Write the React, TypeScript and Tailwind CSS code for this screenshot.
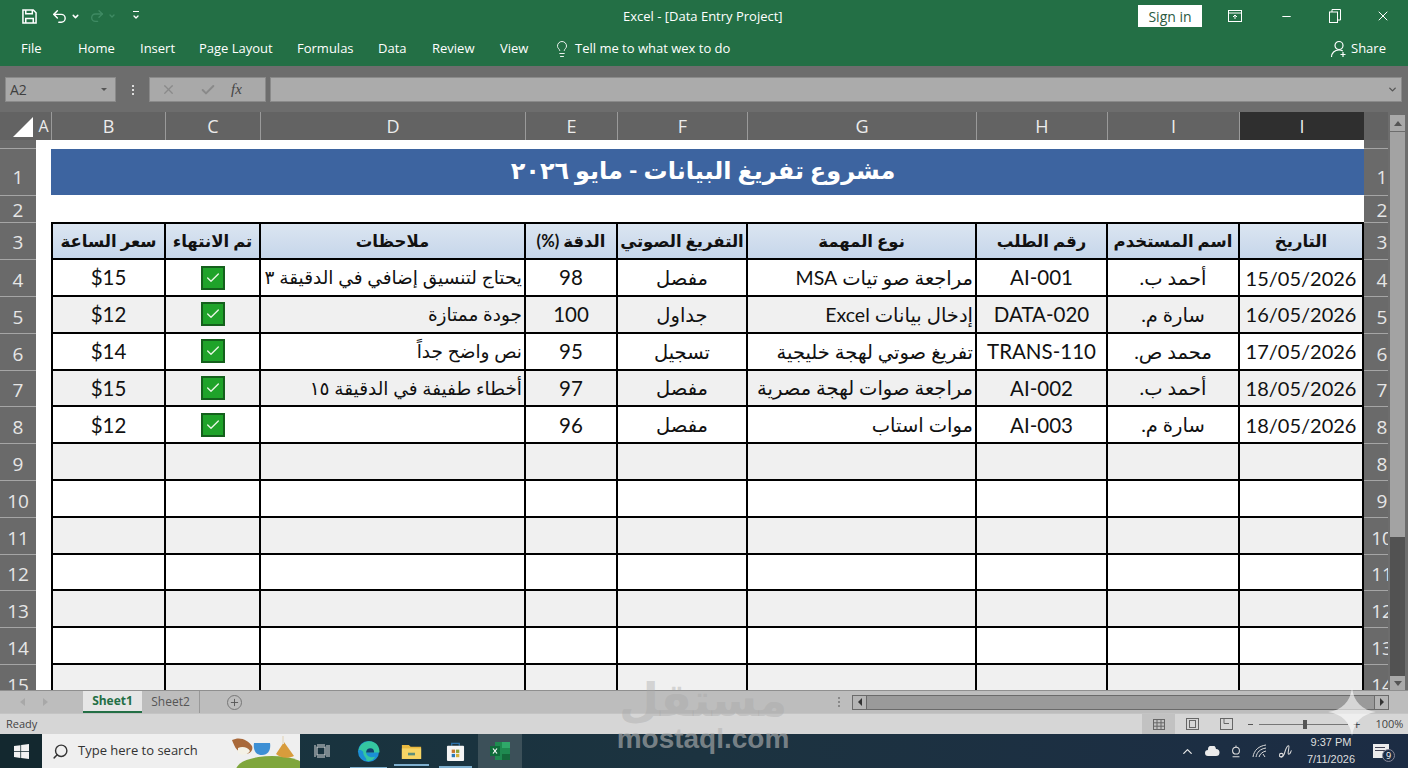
import { Lightbulb, Search, ChevronUp, Check, Minus, X, Undo2, Redo2, ChevronDown, Plus } from "lucide-react";

const columnGrid = "grid grid-cols-[115px_95px_265px_92px_130px_229px_131px_132px_124px]";
const cellFont = "[font-family:Lato,'DejaVu_Sans',sans-serif]";
const uiFont = "[font-family:'Open_Sans','DejaVu_Sans',sans-serif]";

const headers = ["سعر الساعة", "تم الانتهاء", "ملاحظات", "الدقة (%)", "التفريغ الصوتي", "نوع المهمة", "رقم الطلب", "اسم المستخدم", "التاريخ"];

const rows = [
  { price: "$15", note: "يحتاج لتنسيق إضافي في الدقيقة ٣", acc: "98", kind: "مفصل", task: "مراجعة صو تيات MSA", id: "AI-001", user: "أحمد ب.", date: "15/05/2026" },
  { price: "$12", note: "جودة ممتازة", acc: "100", kind: "جداول", task: "إدخال بيانات Excel", id: "DATA-020", user: "سارة م.", date: "16/05/2026" },
  { price: "$14", note: "نص واضح جداً", acc: "95", kind: "تسجيل", task: "تفريغ صوتي لهجة خليجية", id: "TRANS-110", user: "محمد ص.", date: "17/05/2026" },
  { price: "$15", note: "أخطاء طفيفة في الدقيقة ١٥", acc: "97", kind: "مفصل", task: "مراجعة صوات لهجة مصرية", id: "AI-002", user: "أحمد ب.", date: "18/05/2026" },
  { price: "$12", note: "", acc: "96", kind: "مفصل", task: "موات استاب", id: "AI-003", user: "سارة م.", date: "18/05/2026" },
];

const columnHeads = [
  { label: "B", w: "w-[114px]" },
  { label: "C", w: "w-[95px]" },
  { label: "D", w: "w-[265px]" },
  { label: "E", w: "w-[92px]" },
  { label: "F", w: "w-[130px]" },
  { label: "G", w: "w-[229px]" },
  { label: "H", w: "w-[131px]" },
  { label: "I", w: "w-[132px]" },
];

const leftRows = [
  { n: "1", h: "h-[47px] pt-[10px]" }, { n: "2", h: "h-[27px] pt-[3px]" }, { n: "3", h: "h-[37.3px] pt-[3px]" }, { n: "4", h: "h-[36.8px] pt-[4px]" },
  { n: "5", h: "h-[36.8px] pt-[4px]" }, { n: "6", h: "h-[36.8px] pt-[4px]" }, { n: "7", h: "h-[36.8px] pt-[4px]" }, { n: "8", h: "h-[36.8px] pt-[4px]" },
  { n: "9", h: "h-[36.8px] pt-[4px]" }, { n: "10", h: "h-[36.8px] pt-[4px]" }, { n: "11", h: "h-[36.8px] pt-[4px]" }, { n: "12", h: "h-[36.8px] pt-[4px]" },
  { n: "13", h: "h-[36.8px] pt-[4px]" }, { n: "14", h: "h-[36.8px] pt-[4px]" }, { n: "15", h: "h-[36.8px] pt-[4px]" },
];
const rightLabels = ["1", "2", "3", "4", "5", "6", "7", "8", "8", "9", "10", "11", "12", "13", "14"];

function Cell({ children, align = "center", rtl = false, shaded }: { children?: React.ReactNode; align?: string; rtl?: boolean; shaded: boolean }) {
  return (
    <div
      dir={rtl ? "rtl" : undefined}
      className={`border-r-2 border-b-2 border-black flex items-center overflow-hidden whitespace-nowrap px-[2px] ${align === "right" ? "justify-start" : "justify-center"} ${shaded ? "bg-[#f0f0f0]" : "bg-white"}`}
    >
      {children}
    </div>
  );
}

function DoneBox() {
  return (
    <div className="w-[24px] h-[24px] bg-[#1fa32a] border-2 border-[#14601c] flex items-center justify-center">
      <Check className="w-[16px] h-[16px] text-[#eaf7e6]" strokeWidth={2} />
    </div>
  );
}

function DataRow({ row, shaded }: { row?: (typeof rows)[number]; shaded: boolean }) {
  return (
    <div className={`${columnGrid} h-[36.8px] text-[20.5px] leading-none text-[#111] ${cellFont}`}>
      <div className={`border-l-2 border-r-2 border-b-2 border-black flex items-center justify-center ${shaded ? "bg-[#f0f0f0]" : "bg-white"}`}>{row?.price}</div>
      <Cell shaded={shaded}>{row && <DoneBox />}</Cell>
      <Cell shaded={shaded} rtl align="right"><span className="text-[18.5px]">{row?.note}</span></Cell>
      <Cell shaded={shaded}>{row?.acc}</Cell>
      <Cell shaded={shaded} rtl><span className="text-[19.5px]">{row?.kind}</span></Cell>
      <Cell shaded={shaded} rtl align="right"><span className="text-[19.5px]">{row?.task}</span></Cell>
      <Cell shaded={shaded}>{row?.id}</Cell>
      <Cell shaded={shaded} rtl><span className="text-[19.5px]">{row?.user}</span></Cell>
      <Cell shaded={shaded}><span className="text-[20px]">{row?.date}</span></Cell>
    </div>
  );
}

function WindowsLogo() {
  return (
    <svg viewBox="0 0 16 16" className="w-[15px] h-[15px]" fill="#f2f2f2">
      <path d="M0 2.2 6.8 1.2V7.6H0ZM7.6 1.1 16 0V7.6H7.6ZM0 8.4H6.8V14.8L0 13.8ZM7.6 8.4H16V16L7.6 14.9Z" />
    </svg>
  );
}

function EdgeLogo() {
  return (
    <svg viewBox="0 0 24 24" className="w-[23px] h-[23px]">
      <circle cx="12" cy="12" r="11" fill="#1b8fd6" />
      <path d="M1.5 11C3 3 11 -1 18 2.5c4 2 5.8 6 5.4 10.5H9.5c.2 3.5 4 6 9.5 4.5-2 3.5-6 5.5-10 4C12 20 6 17 6.5 12.5 5 10.5 3 10 1.5 11Z" fill="#35c6a0" />
      <path d="M9.5 13c0-3 2-4.5 4.5-4.5s4 1.5 3.8 4.5Z" fill="#12406e" />
    </svg>
  );
}

function FolderLogo() {
  return (
    <svg viewBox="0 0 24 20" className="w-[21px] h-[18px]">
      <path d="M1 3h8l2 2h12v14H1Z" fill="#e9b93f" />
      <rect x="1" y="7" width="22" height="12" fill="#f6d565" />
      <rect x="8" y="12" width="8" height="3" fill="#5d8f7a" />
    </svg>
  );
}

function StoreLogo() {
  return (
    <svg viewBox="0 0 20 22" className="w-[19px] h-[21px]">
      <path d="M6 5V2.5h8V5" fill="none" stroke="#2a6fa8" strokeWidth="1.4" />
      <rect x="1" y="5" width="18" height="16" rx="1" fill="#f5f5f5" />
      <rect x="6" y="9" width="3.5" height="3.5" fill="#c4762f" />
      <rect x="10.5" y="9" width="3.5" height="3.5" fill="#8aa23a" />
      <rect x="6" y="13.5" width="3.5" height="3.5" fill="#2a78b8" />
      <rect x="10.5" y="13.5" width="3.5" height="3.5" fill="#d4b13a" />
    </svg>
  );
}

function ExcelLogo() {
  return (
    <svg viewBox="0 0 22 20" className="w-[22px] h-[20px]">
      <rect x="6" y="1" width="15" height="18" fill="#1f8a50" />
      <rect x="13" y="1" width="8" height="6" fill="#2fa869" />
      <rect x="13" y="13" width="8" height="6" fill="#14683a" />
      <rect x="1" y="5" width="10" height="10" fill="#0f6b3a" />
      <path d="M4 7.5 8 12.5M8 7.5 4 12.5" stroke="#fff" strokeWidth="1.2" />
    </svg>
  );
}

function SearchArt() {
  return (
    <svg viewBox="0 0 70 34" className="w-[70px] h-[34px]">
      <ellipse cx="42" cy="36" rx="36" ry="14" fill="#7fa63c" />
      <path d="M2 6c8-4 16 0 20 6 2 5-4 10-10 7C6 17 4 11 2 6Z" fill="#a9693a" />
      <path d="M8 14c4-2 10-1 12 3-2 4-8 5-12 2Z" fill="#f4f1e6" />
      <path d="M24 9h16c1 6-1 12-8 12s-9-6-8-12Z" fill="#3d8fd4" />
      <path d="M46 20 54 8l10 14c-6 3-14 2-18-2Z" fill="#d89c3c" />
      <rect x="52" y="2" width="2" height="8" fill="#e8e0d0" />
    </svg>
  );
}

function ColumnLabel({ label, w }: { label: string; w: string }) {
  return <div className={`${w} h-full border-r border-[#9a9a9a] flex items-center justify-center text-[18px] text-[#ececec]`}>{label}</div>;
}

function TaskbarMark({ children, gap }: { children: React.ReactNode; gap: string }) {
  return (
    <div className={`relative ${gap} flex items-center justify-center`}>
      {children}
      <div className="absolute -bottom-[6px] -left-[7px] -right-[7px] h-[2px] bg-[#7fb0cf]" />
    </div>
  );
}

export default function App() {
  return (
    <div className={`relative w-[1408px] h-[768px] overflow-hidden bg-[#636363] ${uiFont}`}>
      {/* title bar */}
      <div className="h-[66px] bg-[#236f45] text-white">
        <div className="h-[32px] flex items-center text-[13px]">
          <svg viewBox="0 0 16 16" className="w-[15px] h-[15px] ml-[22px]" fill="none" stroke="#fff" strokeWidth="1.6">
            <path d="M1 1h11l3 3v11H1Z" />
            <path d="M4 1v4h7V1M4 15v-5h8v5" />
          </svg>
          <Undo2 className="w-[17px] h-[17px] ml-[14px]" />
          <ChevronDown className="w-[9px] h-[9px] ml-[3px]" strokeWidth={4} />
          <Redo2 className="w-[16px] h-[16px] ml-[9px] text-[#3f8a63]" />
          <ChevronDown className="w-[8px] h-[8px] ml-[3px] text-[#3f8a63]" strokeWidth={4} />
          <div className="ml-[16px] flex flex-col items-center gap-[1px]">
            <div className="w-[6px] h-[1px] bg-white" />
            <ChevronDown className="w-[8px] h-[8px]" strokeWidth={4} />
          </div>
          <div className="ml-[483px] w-[170px] whitespace-nowrap pt-[1px]">Excel - [Data Entry Project]</div>
          <div className="ml-[345px] w-[64px] h-[22px] bg-white text-[#2a5a42] text-[14px] flex items-center justify-center">Sign in</div>
          <svg viewBox="0 0 14 12" className="w-[14px] h-[12px] ml-[26px]" fill="none" stroke="#fff" strokeWidth="1">
            <rect x="0.5" y="0.5" width="13" height="11" />
            <path d="M0.5 3h13M7 9V5M5 7l2-2 2 2" />
          </svg>
          <Minus className="w-[13px] h-[13px] ml-[38px]" />
          <svg viewBox="0 0 12 14" className="w-[12px] h-[14px] ml-[36px]" fill="none" stroke="#fff" strokeWidth="1">
            <rect x="0.5" y="3" width="8" height="10.5" />
            <path d="M3 3V0.5h8.5V11H8.5" />
          </svg>
          <X className="w-[16px] h-[16px] ml-[34px]" strokeWidth={1.5} />
        </div>
        <div className="h-[34px] flex items-center text-[13px] whitespace-nowrap">
          <span className="ml-[21px] w-[57px]">File</span>
          <span className="w-[62px]">Home</span>
          <span className="w-[59px]">Insert</span>
          <span className="w-[98px]">Page Layout</span>
          <span className="w-[81px]">Formulas</span>
          <span className="w-[54px]">Data</span>
          <span className="w-[68px]">Review</span>
          <span className="w-[53px]">View</span>
          <Lightbulb className="w-[18px] h-[18px]" strokeWidth={1.2} />
          <span className="ml-[4px] w-[755px]">Tell me to what wex to do</span>
          <svg viewBox="0 0 18 18" className="w-[18px] h-[18px]" fill="none" stroke="#fff" strokeWidth="1.2">
            <circle cx="9" cy="5.5" r="4" />
            <path d="M1.5 17c0-4 3-7 7.5-7 1.500 0 2.800.3 3.800 1M13 12v5M10.500 14.500h5" />
          </svg>
          <span className="ml-[3px]">Share</span>
        </div>
      </div>

      {/* formula bar */}
      <div className="h-[46px] bg-[#6d6d6d] pt-[11px] flex items-start pl-[5px]">
        <div className="w-[111px] h-[25px] bg-[#a9a9a9] border border-[#8a8a8a] flex items-center justify-between pl-[4px] pr-[8px] text-[14px] text-[#3f3f3f]">
          A2
          <div className="w-0 h-0 border-l-[3px] border-r-[3px] border-t-[3px] border-l-transparent border-r-transparent border-t-[#555]" />
        </div>
        <div className="w-[33px] h-[25px] flex flex-col items-center justify-center gap-[2px]">
          <div className="w-[2px] h-[2px] bg-[#ddd]" />
          <div className="w-[2px] h-[2px] bg-[#ddd]" />
          <div className="w-[2px] h-[2px] bg-[#ddd]" />
        </div>
        <div className="w-[117px] h-[25px] bg-[#a9a9a9] border border-[#8a8a8a] flex items-center text-[#8a8a8a]">
          <X className="w-[15px] h-[15px] ml-[11px]" />
          <Check className="w-[16px] h-[16px] ml-[24px]" strokeWidth={3} />
          <span className="ml-[15px] text-[15px] italic text-[#444] [font-family:'Liberation_Serif',serif]">fx</span>
        </div>
        <div className="ml-[4px] w-[1132px] h-[25px] bg-[#ababab] border border-[#8a8a8a] flex items-center justify-end pr-[3px]">
          <ChevronDown className="w-[11px] h-[11px] text-[#555]" strokeWidth={3} />
        </div>
      </div>

      <div className="h-[578px] flex">
        <div className="w-[1388px] shrink-0 overflow-hidden">
          {/* column headers */}
          <div className="h-[28px] flex bg-[#636363]">
            <div className="w-[36px] h-full flex items-end justify-end pb-[3px] pr-[3px]">
              <div className="w-0 h-0 border-l-[20px] border-b-[20px] border-l-transparent border-b-white" />
            </div>
            <div className="w-[16px] h-full border-r border-[#9a9a9a] flex items-center justify-center text-[16px] text-[#ececec]">A</div>
            {columnHeads.map((c, i) => (
              <ColumnLabel key={i} label={c.label} w={c.w} />
            ))}
            <div className="w-[124px] h-full bg-[#2f2f2f] flex items-center justify-center text-[18px] text-[#ececec]">I</div>
          </div>

          {/* sheet */}
          <div className="h-[550px] flex overflow-hidden">
            <div className="w-[36px] shrink-0 bg-[#6a6a6a] pt-[8px] text-[#e6e6e6] text-[19px]">
              {leftRows.map((r) => (
                <div key={r.n} className={`${r.h} border-t border-[#a5a5a5] flex items-center justify-center`}>{r.n}</div>
              ))}
            </div>
            <div className="w-[1328px] shrink-0 bg-white pl-[15px] pt-[9px]">
              <div dir="rtl" className={`w-[1313px] h-[46px] bg-[#3d64a0] flex items-center justify-center text-white text-[24px] font-bold pr-[9px] pb-[4px] ${cellFont}`}>
                مشروع تفريغ البيانات - مايو ٢٠٢٦
              </div>
              <div className="h-[27px]" />
              <div className={`${columnGrid} h-[38.3px] border-t-2 border-black text-[16.5px] font-bold text-[#111] ${cellFont}`}>
                {headers.map((h, i) => (
                  <div
                    key={h}
                    dir="rtl"
                    className={`border-r-2 border-b-2 border-black flex items-center justify-center whitespace-nowrap overflow-hidden bg-gradient-to-b from-[#dbe5f1] to-[#c6d6ea] ${i === 0 ? "border-l-2" : ""}`}
                  >
                    {h}
                  </div>
                ))}
              </div>
              {rows.map((row, i) => (
                <DataRow key={row.id} row={row} shaded={i % 2 === 1} />
              ))}
              {[true, false, true, false, true, false, true].map((shaded, i) => (
                <DataRow key={i} shaded={shaded} />
              ))}
            </div>
            <div className="w-[24px] shrink-0 bg-[#6a6a6a] pt-[8px] text-[#e6e6e6] text-[19px] overflow-hidden">
              {rightLabels.map((n, i) => (
                <div key={i} className={`${leftRows[i].h} w-[36px] border-t border-[#a5a5a5] flex items-center justify-center whitespace-nowrap`}>{n}</div>
              ))}
            </div>
          </div>
        </div>

        {/* vertical scrollbar */}
        <div className="w-[20px] shrink-0 bg-[#6d6d6d] pl-[2px] pr-[3px] flex flex-col">
          <div className="h-[16px] mt-[3px] bg-[#a9a9a9] flex items-center justify-center">
            <div className="w-0 h-0 border-l-[4px] border-r-[4px] border-b-[5px] border-l-transparent border-r-transparent border-b-[#555]" />
          </div>
          <div className="h-[405px] mt-[1px] bg-[#a3a3a3]" />
          <div className="flex-1 bg-[#525252]" />
          <div className="h-[14px] bg-[#a9a9a9] flex items-center justify-center">
            <div className="w-0 h-0 border-l-[4px] border-r-[4px] border-t-[5px] border-l-transparent border-r-transparent border-t-[#555]" />
          </div>
        </div>
      </div>

      {/* sheet tabs */}
      <div className="h-[23px] bg-[#bdbdbd] border-t border-[#8f8f8f] flex items-center text-[12px] text-[#555]">
        <div className="w-0 h-0 ml-[20px] border-t-[4px] border-b-[4px] border-r-[5px] border-t-transparent border-b-transparent border-r-[#a8a8a8]" />
        <div className="w-0 h-0 ml-[18px] border-t-[4px] border-b-[4px] border-l-[5px] border-t-transparent border-b-transparent border-l-[#a8a8a8]" />
        <div className="ml-[35px] w-[59px] h-full bg-[#e6e6e6] border-b-2 border-[#236f45] flex items-center justify-center font-bold text-[#236f45]">Sheet1</div>
        <div className="w-[58px] h-full flex items-center justify-center border-r border-[#999]">Sheet2</div>
        <div className="ml-[27px] w-[15px] h-[15px] rounded-full border border-[#777] flex items-center justify-center">
          <Plus className="w-[11px] h-[11px]" />
        </div>
        <div className="ml-[596px] flex flex-col gap-[2px]">
          <div className="w-[2px] h-[2px] bg-[#888]" />
          <div className="w-[2px] h-[2px] bg-[#888]" />
          <div className="w-[2px] h-[2px] bg-[#888]" />
        </div>
        <div className="ml-[12px] w-[537px] h-[15px] bg-[#9a9a9a] border border-[#6a6a6a] flex justify-between">
          <div className="w-[14px] bg-[#b5b5b5] border-r border-[#6a6a6a] flex items-center justify-center">
            <div className="w-0 h-0 border-t-[4px] border-b-[4px] border-r-[4px] border-t-transparent border-b-transparent border-r-[#333]" />
          </div>
          <div className="w-[14px] bg-[#b5b5b5] border-l border-[#6a6a6a] flex items-center justify-center">
            <div className="w-0 h-0 border-t-[4px] border-b-[4px] border-l-[4px] border-t-transparent border-b-transparent border-l-[#333]" />
          </div>
        </div>
      </div>

      {/* status bar */}
      <div className="h-[21px] bg-[#d6d6d6] border-t border-[#c4c4c4] flex items-center text-[11px] text-[#444]">
        <span className="ml-[6px] w-[1136px]">Ready</span>
        <div className="w-[33px] h-full bg-[#c2c2c2] flex items-center justify-center">
          <svg viewBox="0 0 12 11" className="w-[12px] h-[11px]" fill="none" stroke="#666" strokeWidth="1"><rect x="0.5" y="0.5" width="11" height="10" /><path d="M4 0v11M8 0v11M0 3.8h12M0 7.2h12" /></svg>
        </div>
        <svg viewBox="0 0 13 12" className="w-[13px] h-[12px] ml-[11px]" fill="none" stroke="#666" strokeWidth="1"><rect x="0.5" y="0.5" width="12" height="11" /><rect x="3.5" y="2.5" width="6" height="7" /></svg>
        <svg viewBox="0 0 13 12" className="w-[13px] h-[12px] ml-[21px]" fill="none" stroke="#666" strokeWidth="1"><rect x="0.5" y="0.5" width="12" height="11" /><path d="M4 .5v5h5" /></svg>
        <div className="ml-[15px] w-[5px] h-[1px] bg-[#555]" />
        <div className="ml-[6px] w-[89px] h-[1px] bg-[#777] flex items-center">
          <div className="ml-[44px] w-[4px] h-[9px] bg-[#555]" />
        </div>
        <span className="ml-[5px] text-[13px] leading-none">+</span>
        <span className="ml-[15px]">100%</span>
      </div>

      {/* taskbar */}
      <div className="h-[34px] bg-gradient-to-r from-[#16333d] via-[#1c3340] to-[#1c2c44] flex items-center text-[#e8e8e8]">
        <div className="w-[42px] shrink-0 h-full bg-[#13282f] flex items-center justify-center"><WindowsLogo /></div>
        <div className="w-[258px] shrink-0 h-full bg-[#efefef] flex items-center overflow-hidden text-[#333] text-[13px]">
          <Search className="w-[17px] h-[17px] ml-[10px] -scale-x-100" />
          <span className="ml-[9px] whitespace-nowrap">Type here to search</span>
          <div className="ml-auto"><SearchArt /></div>
        </div>
        <svg viewBox="0 0 16 14" className="w-[16px] h-[14px] ml-[14px]" fill="none" stroke="#ddd" strokeWidth="1"><rect x="3" y="3" width="8" height="8" /><path d="M1 1v12M13 1v12M15 1v12M3 1h8M3 13h8" /></svg>
        <TaskbarMark gap="ml-[27px] w-[23px]"><EdgeLogo /></TaskbarMark>
        <TaskbarMark gap="ml-[21px] w-[21px]"><FolderLogo /></TaskbarMark>
        <TaskbarMark gap="ml-[24px] w-[19px]"><StoreLogo /></TaskbarMark>
        <div className="ml-[13px] w-[44px] h-full bg-[#3c5059] flex items-center justify-center"><ExcelLogo /></div>
        <ChevronUp className="w-[15px] h-[15px] ml-[658px]" />
        <svg viewBox="0 0 16 10" className="w-[16px] h-[10px] ml-[9px]" fill="#ececec"><path d="M4 10a3 3 0 0 1 0-6 4 4 0 0 1 8-1 3.500 3.500 0 0 1 0 7Z" /></svg>
        <svg viewBox="0 0 14 16" className="w-[12px] h-[15px] ml-[10px]" fill="none" stroke="#ddd" strokeWidth="1.2"><circle cx="7" cy="7" r="4" /><path d="M3 14h8M7 1v2" /></svg>
        <svg viewBox="0 0 16 14" className="w-[16px] h-[14px] ml-[10px]" fill="none" stroke="#ddd" strokeWidth="1"><path d="M1 13C2 6 7 2 14 1M4 13C5 8 8 5 14 4M7 13C8 10 10 8 14 7M11 10l2 3" /></svg>
        <svg viewBox="0 0 16 16" className="w-[16px] h-[15px] ml-[10px]" fill="none" stroke="#ddd" strokeWidth="1.1"><path d="M1 13c3 2 5-1 6-5s3-7 4-6-2 9 0 9 2-4 3-4" /><circle cx="3" cy="12" r="2" /></svg>
        <div className="ml-[2px] w-[70px] text-center text-[11px] leading-[17px] text-[#dedede] [font-family:'Liberation_Sans',sans-serif]">
          <div>9:37 PM</div>
          <div>7/11/2026</div>
        </div>
        <div className="relative ml-[7px] w-[16px] h-[14px] bg-[#ececec]">
          <div className="absolute left-[2px] top-[3px] w-[10px] h-[1px] bg-[#445]" />
          <div className="absolute left-[2px] top-[6px] w-[10px] h-[1px] bg-[#445]" />
          <div className="absolute -right-[6px] top-[5px] w-[13px] h-[13px] rounded-full border border-[#889] bg-[#1c2c44] text-[9px] leading-[11px] text-center text-white">9</div>
        </div>
      </div>

      {/* watermark over the sheet and bars */}
      <div className="absolute left-[608px] top-[672px] w-[190px] h-[80px] flex flex-col items-center justify-end pointer-events-none">
        <div dir="rtl" className="text-[46px] leading-[52px] font-bold text-[#a5a5a5]/40 [font-family:'DejaVu_Sans',sans-serif]">مستقل</div>
        <div className="text-[28px] leading-[26px] font-bold text-[#b5b5b5]/60 [font-family:'Liberation_Sans',sans-serif]">mostaql.com</div>
      </div>
      <svg viewBox="0 0 48 48" className="absolute left-[1328px] top-[688px] w-[48px] h-[48px] pointer-events-none" fill="#ffffff" fillOpacity="0.6">
        <path d="M24 0C26 14 34 22 48 24 34 26 26 34 24 48 22 34 14 26 0 24 14 22 22 14 24 0Z" />
      </svg>
    </div>
  );
}
